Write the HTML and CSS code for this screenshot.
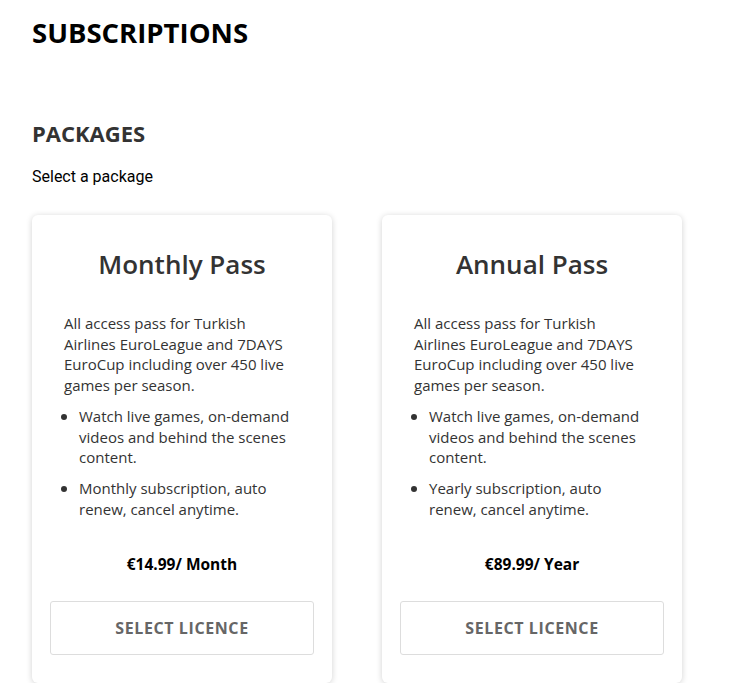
FILE: index.html
```html
<!DOCTYPE html>
<html lang="en">
<head>
<meta charset="UTF-8">
<title>Subscriptions</title>
<link rel="stylesheet" href="styles.css">
</head>
<body>
<div class="page">
<h1>SUBSCRIPTIONS</h1>

<h2>PACKAGES</h2>
<p class="intro">Select a package</p>

<div class="packages">
  <div class="card">
    <h3>Monthly Pass</h3>
    <p class="desc">All access pass for Turkish Airlines EuroLeague and 7DAYS EuroCup including over 450 live games per season.</p>
    <ul>
      <li>Watch live games, on-demand videos and behind the scenes content.</li>
      <li>Monthly subscription, auto renew, cancel anytime.</li>
    </ul>
    <p class="price">€14.99/ Month</p>
    <button>SELECT LICENCE</button>
  </div>
  <div class="card">
    <h3>Annual Pass</h3>
    <p class="desc">All access pass for Turkish Airlines EuroLeague and 7DAYS EuroCup including over 450 live games per season.</p>
    <ul>
      <li>Watch live games, on-demand videos and behind the scenes content.</li>
      <li>Yearly subscription, auto renew, cancel anytime.</li>
    </ul>
    <p class="price">€89.99/ Year</p>
    <button>SELECT LICENCE</button>
  </div>
</div>
</div>
</body>
</html>
```

FILE: styles.css
```css
body{margin:0;background:#fff;font-family:"Open Sans",sans-serif;color:#333;}
.page{padding:16px 32px 0;}
h1{margin:0;font-size:27.5px;font-weight:700;color:#000;line-height:33px;}
h2{margin:71px 0 0;font-size:22px;font-weight:700;color:#333;line-height:26px;}
.intro{margin:21px 0 0;font-family:Roboto,sans-serif;font-size:16px;color:#000;line-height:19px;}
.packages{display:flex;gap:50px;margin-top:29px;}
.card{width:300px;box-sizing:border-box;background:#fff;border-radius:6px;box-shadow:0 1px 6px rgba(0,0,0,0.18);padding:33px 18px 28px;}
.card h3{margin:0;text-align:center;font-size:26px;font-weight:600;color:#333;line-height:32px;}
.desc{margin:33px 14px 0;font-size:15px;line-height:20.7px;}
ul{margin:10px 14px 0;padding:0 0 0 15px;font-size:15px;line-height:20.7px;}
li{margin-bottom:10px;}
li::marker{font-size:16px;color:#333;}
.price{margin:35px 0 0;text-align:center;font-weight:700;font-size:15.5px;color:#000;line-height:20px;}
button{display:block;width:100%;height:54px;margin-top:27px;background:#fff;border:1px solid #ddd;border-radius:3px;font-family:"Open Sans",sans-serif;font-size:16px;font-weight:700;color:#666;letter-spacing:0.6px;cursor:pointer;}
```
